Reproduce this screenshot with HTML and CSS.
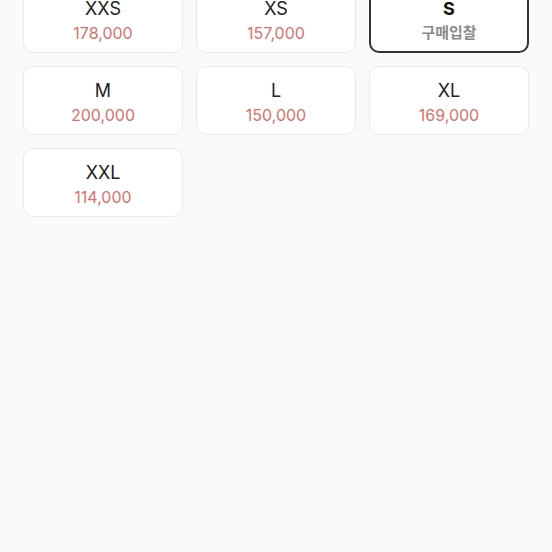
FILE: index.html
```html
<!DOCTYPE html>
<html lang="ko">
<head>
    <meta charset="UTF-8">
    <title>사이즈 선택</title>
    <meta name="viewport" content="width=device-width, initial-scale=1.0">
    <link rel="stylesheet" href="styles.css">
</head>
<body>
    <div class="size-grid">
        <div class="size-card">
            <div class="size-name">XXS</div>
            <div class="size-price">178,000</div>
        </div>
        <div class="size-card">
            <div class="size-name">XS</div>
            <div class="size-price">157,000</div>
        </div>
        <div class="size-card selected">
            <div class="size-name">S</div>
            <div class="size-price">구매입찰</div>
        </div>
        <div class="size-card">
            <div class="size-name">M</div>
            <div class="size-price">200,000</div>
        </div>
        <div class="size-card">
            <div class="size-name">L</div>
            <div class="size-price">150,000</div>
        </div>
        <div class="size-card">
            <div class="size-name">XL</div>
            <div class="size-price">169,000</div>
        </div>
        <div class="size-card">
            <div class="size-name">XXL</div>
            <div class="size-price">114,000</div>
        </div>
    </div>
</body>
</html>
```

FILE: styles.css
```css
body {
    margin: 0;
    background-color: #fafafa;
    font-family: Inter, "Noto Sans", "Noto Sans CJK KR", sans-serif;
    overflow: hidden;
}
.size-grid {
    display: grid;
    grid-template-columns: repeat(3, 160px);
    gap: 13px;
    padding: 0 23px;
    margin-top: -16px;
}
.size-card {
    box-sizing: border-box;
    height: 69px;
    padding-top: 13px;
    background-color: #fff;
    border: 1px solid #e9e9e9;
    border-radius: 10px;
    text-align: center;
}
.size-name {
    font-size: 18px;
    line-height: 22px;
    color: #222;
}
.size-price {
    margin-top: 2px;
    font-size: 16px;
    line-height: 22px;
    color: #d7706c;
}
.size-card.selected {
    border: 2px solid #333;
    padding-top: 12px;
}
.size-card.selected .size-name {
    font-weight: 700;
    color: #111;
}
.size-card.selected .size-price {
    font-size: 15px;
    font-weight: 600;
    color: #8a8a8a;
}
```
